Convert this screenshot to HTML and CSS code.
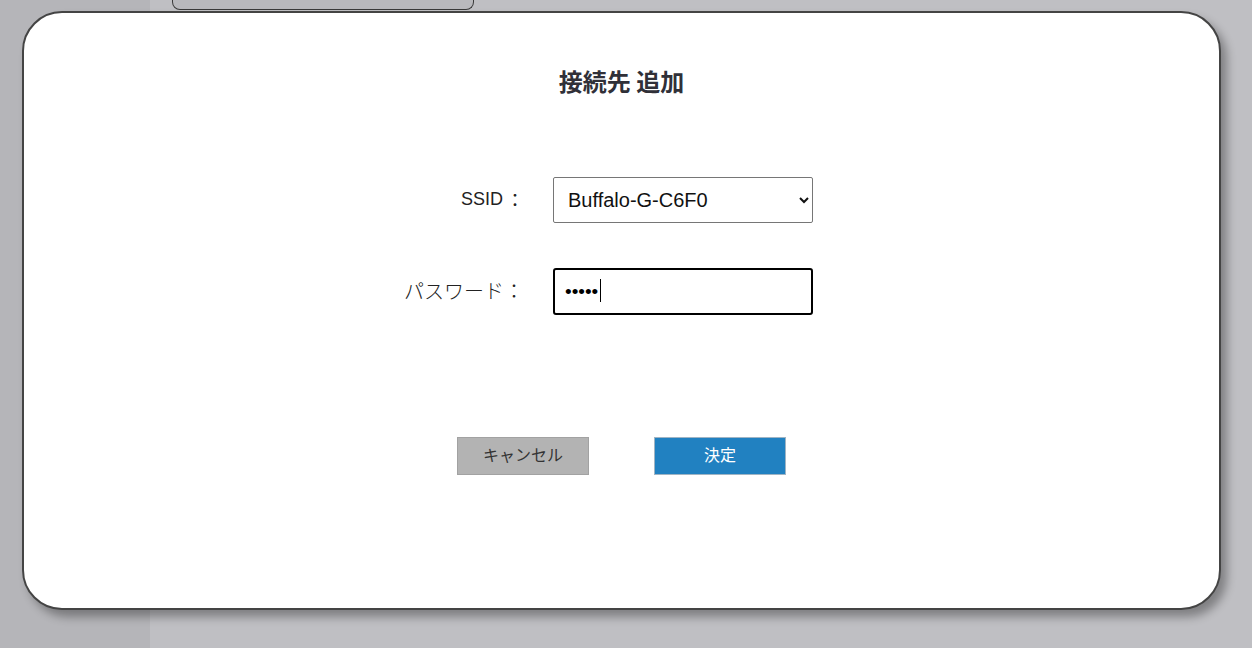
FILE: index.html
```
<!DOCTYPE html>
<html lang="ja">
<head>
<meta charset="utf-8">
<title>接続先 追加</title>
<link rel="stylesheet" href="styles.css">
</head>
<body>
<div class="app">
  <aside class="sidebar"></aside>
  <main class="main">
    <div class="tabbox"></div>
  </main>
</div>
<div class="modal">
  <h1 class="title">接続先 追加</h1>
  <form class="form">
    <div class="row">
      <label class="label" for="ssid">SSID<span class="colon">：</span></label>
      <select id="ssid" class="select">
        <option>Buffalo-G-C6F0</option>
      </select>
    </div>
    <div class="row row-pass">
      <label class="label label-jp" for="pass">パスワード：</label>
      <div class="field">
        <input id="pass" class="input" type="password" value="12345">
        <span class="caret"></span>
      </div>
    </div>
    <div class="buttons">
      <button type="button" class="btn btn-cancel">キャンセル</button>
      <button type="button" class="btn btn-ok">決定</button>
    </div>
  </form>
</div>
</body>
</html>
```

FILE: styles.css
```
html, body {
  margin: 0;
  padding: 0;
  height: 100%;
}
body {
  font-family: "Noto Sans CJK JP", "Liberation Sans", sans-serif;
  overflow: hidden;
}
.app {
  display: flex;
  height: 648px;
}
.sidebar {
  width: 150px;
  background: #b5b5b9;
}
.main {
  flex: 1;
  background: #bfbfc3;
}
.tabbox {
  margin-left: 22px;
  width: 300px;
  height: 9px;
  border: 1px solid #3a3a3a;
  border-top: none;
  border-radius: 0 0 8px 8px;
  background: #b9b9bd;
}
.modal {
  position: absolute;
  left: 22px;
  top: 11px;
  width: 1195px;
  height: 595px;
  background: #fff;
  border: 2px solid #444;
  border-radius: 40px;
  box-shadow: 6px 7px 10px rgba(0, 0, 0, 0.33);
  display: flex;
  flex-direction: column;
  align-items: center;
}
.title {
  margin: 51px 0 0;
  font-size: 24px;
  line-height: 34px;
  font-weight: bold;
  color: #303038;
}
.form {
  display: flex;
  flex-direction: column;
  align-items: center;
  margin-top: 79px;
}
.row {
  display: flex;
  align-items: center;
  width: 383px;
  gap: 29px;
}
.row-pass {
  margin-top: 45px;
}
.label {
  width: 94px;
  min-width: 0;
  flex-shrink: 0;
  display: flex;
  justify-content: flex-end;
  align-items: center;
  white-space: nowrap;
  font-size: 18px;
  line-height: 24px;
  color: #222;
  font-family: "Liberation Sans", "Noto Sans CJK JP", sans-serif;
  padding-bottom: 3px;
}
.colon {
  font-family: "Noto Sans CJK JP", sans-serif;
  margin-left: 3px;
}
.label-jp {
  font-family: "Noto Sans CJK JP", sans-serif;
  font-size: 20px;
  font-weight: 300;
  color: #222;
  padding-bottom: 2px;
}
.select {
  width: 260px;
  flex-shrink: 0;
  height: 46px;
  box-sizing: border-box;
  border: 1px solid #767676;
  border-radius: 2px;
  background: #fff;
  padding: 0 0 0 10px;
  font-family: "Liberation Sans", sans-serif;
  font-size: 20px;
  color: #111;
}
.field {
  position: relative;
  flex-shrink: 0;
  width: 260px;
  height: 47px;
}
.input {
  width: 100%;
  height: 100%;
  box-sizing: border-box;
  border: 2px solid #000;
  border-radius: 3px;
  outline: none;
  padding: 0 0 0 10px;
  font-family: "Liberation Sans", sans-serif;
  font-size: 19px;
  color: #000;
}
.caret {
  position: absolute;
  left: 47px;
  top: 11px;
  width: 1px;
  height: 23px;
  background: #000;
}
.buttons {
  display: flex;
  gap: 65px;
  margin-top: 122px;
}
.btn {
  width: 132px;
  height: 38px;
  box-sizing: border-box;
  font-family: "Noto Sans CJK JP", sans-serif;
  font-size: 16px;
  line-height: 20px;
  padding: 0 0 4px;
  cursor: pointer;
}
.btn-cancel {
  background: #b3b3b3;
  border: 1px solid #a2a2a2;
  color: #333;
}
.btn-ok {
  background: #2181c1;
  border: 1px solid #9fb4c4;
  color: #fff;
}
```
